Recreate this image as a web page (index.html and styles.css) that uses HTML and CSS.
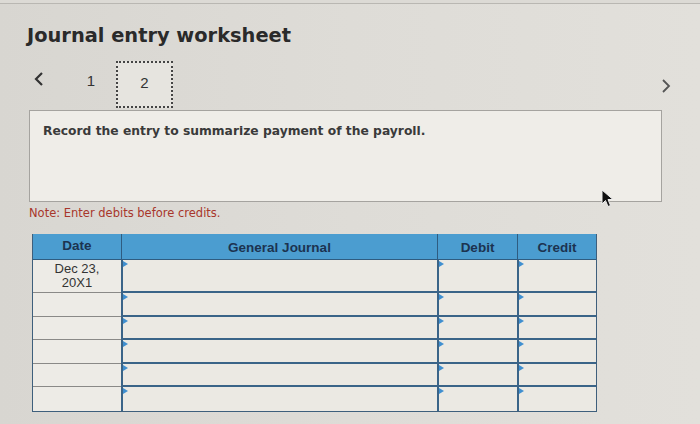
FILE: index.html
```html
<!DOCTYPE html>
<html>
<head>
<meta charset="utf-8">
<link rel="stylesheet" href="styles.css">
</head>
<body>
<div class="page">
  <h1 class="title">Journal entry worksheet</h1>
  <div class="nav">
    <span class="chev chev-left"><svg width="12" height="16" viewBox="0 0 12 16"><path d="M9 2 L3 8 L9 14" fill="none" stroke="#333" stroke-width="2.2"/></svg></span>
    <span class="pg pg-first">1</span>
    <span class="pg pg-active">2</span>
    <span class="spacer"></span>
    <span class="chev chev-right"><svg width="12" height="16" viewBox="0 0 12 16"><path d="M3 2 L9 8 L3 14" fill="none" stroke="#555" stroke-width="1.8"/></svg></span>
  </div>
  <div class="prompt">Record the entry to summarize payment of the payroll.</div>
  <div class="note">Note: Enter debits before credits.</div>
  <div class="journal">
    <div class="hd">Date</div>
    <div class="hd">General Journal</div>
    <div class="hd">Debit</div>
    <div class="hd">Credit</div>

    <div class="date first">Dec 23,<br>20X1</div>
    <div class="inp"></div><div class="inp"></div><div class="inp"></div>
    <div class="date"></div>
    <div class="inp"></div><div class="inp"></div><div class="inp"></div>
    <div class="date"></div>
    <div class="inp"></div><div class="inp"></div><div class="inp"></div>
    <div class="date"></div>
    <div class="inp"></div><div class="inp"></div><div class="inp"></div>
    <div class="date"></div>
    <div class="inp"></div><div class="inp"></div><div class="inp"></div>
    <div class="date"></div>
    <div class="inp"></div><div class="inp"></div><div class="inp"></div>
  </div>
  <svg class="cursor" width="14" height="20" viewBox="0 0 14 20"><path d="M1 1 L1 15 L4.5 11.5 L7 17.5 L9.5 16.5 L7 10.5 L12 10.5 Z" fill="#111" stroke="#eee" stroke-width="1"/></svg>
</div>
</body>
</html>
```
FILE: styles.css
```css
html, body {
  margin: 0;
  padding: 0;
}
body {
  background: #dcdad5;
  width: 700px;
  height: 424px;
  overflow: hidden;
}
.page {
  position: relative;
  border-top: 1px solid #b9b7b2;
  margin-top: 3px;
  padding: 0 38px 0 29px;
  height: 420px;
  background: linear-gradient(90deg, #d8d6d1 0%, #dedcd7 50%, #e2e0db 100%);
}
.title {
  margin: 20px 0 0 -2px;
  font-family: "DejaVu Sans", Verdana, sans-serif;
  font-weight: bold;
  font-size: 19.4px;
  line-height: 24px;
  color: #2a2a2a;
}
.nav {
  display: flex;
  align-items: center;
  height: 48px;
  margin-top: 12px;
  font-family: "Liberation Sans", Arial, sans-serif;
  font-size: 15px;
  color: #333;
}
.chev {
  display: flex;
  align-items: center;
}
.chev-left {
  margin-left: 4px;
  margin-top: -10px;
}
.pg {
  width: 57px;
  text-align: center;
  margin-top: -8px;
}
.pg-first {
  margin-left: 26px;
  width: 40px;
  margin-right: 5px;
}
.pg-active {
  box-sizing: border-box;
  height: 47px;
  margin-top: 0;
  line-height: 40px;
  border: 2px dotted #444;
  background: #e6e4df;
  position: relative;
  z-index: 1;
}
.spacer {
  flex: 1;
}
.chev-right {
  margin-right: -10px;
  margin-top: 4px;
}
.prompt {
  box-sizing: border-box;
  height: 92px;
  margin-top: 2px;
  border: 1px solid #a5a39f;
  background: #efede8;
  padding: 13px 13px;
  font-family: "DejaVu Sans", Verdana, sans-serif;
  font-weight: bold;
  font-size: 12.3px;
  color: #3a3a3a;
}
.note {
  margin-top: 3px;
  font-family: "DejaVu Sans", Verdana, sans-serif;
  font-size: 11.5px;
  line-height: 16px;
  color: #a8362b;
}
.journal {
  display: grid;
  grid-template-columns: 88px 316px 80px 79px;
  grid-template-rows: 26px 33px repeat(5, 23.5px);
  width: 563px;
  margin: 13px 0 0 3px;
  border: 1px solid #3e5f7c;
  border-top: none;
  font-family: "Liberation Sans", Arial, sans-serif;
}
.hd {
  background: #4b9dd0;
  color: #1c3350;
  font-weight: bold;
  font-size: 13.5px;
  text-align: center;
  line-height: 28px;
  border-left: 1px solid #2f5c80;
  border-bottom: 1px solid #2f5c80;
}
.hd:first-child {
  border-left: none;
  line-height: 24px;
}
.date {
  background: #edebe6;
  border-bottom: 1px solid #8a8987;
  font-size: 13px;
  color: #333;
  text-align: center;
  line-height: 14px;
}
.date.first {
  padding-top: 2px;
}
.date:nth-last-child(4) {
  border-bottom: none;
}
.inp {
  position: relative;
  box-sizing: border-box;
  background: #ebe9e3;
  border-left: 2px solid #3a6488;
  border-bottom: 2px solid #3a6488;
}
.inp:nth-last-child(-n+3) {
  border-bottom: none;
}
.inp::before {
  content: "";
  position: absolute;
  left: 0;
  top: 1px;
  border-top: 3px solid transparent;
  border-bottom: 3px solid transparent;
  border-left: 5px solid #3f8fd0;
}
.cursor {
  position: absolute;
  left: 601px;
  top: 185px;
}
```
